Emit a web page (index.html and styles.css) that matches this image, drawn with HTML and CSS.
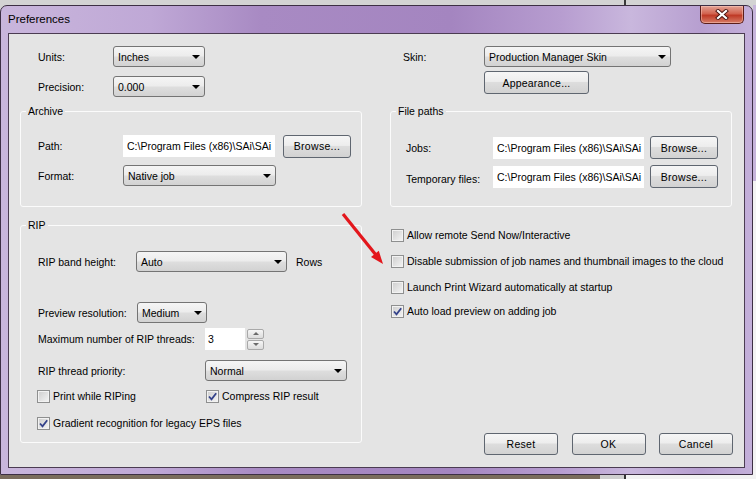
FILE: index.html
```html
<!DOCTYPE html>
<html lang="en">
<head>
    <meta charset="UTF-8">
    <meta name="viewport" content="width=device-width, initial-scale=1.0">
    <title>Preferences</title>
    <link rel="stylesheet" href="styles.css">
</head>
<body>
    <div class="behind-top"></div>
    <div class="screen">
        <div class="dialog">
            <div class="titlebar">
                <span class="title">Preferences</span>
                <div class="close-btn">
                    <svg width="16" height="11" viewBox="0 0 16 11">
                        <path d="M4 2 L12 9 M12 2 L4 9" stroke="#4a1410" stroke-width="4" stroke-linecap="square"/>
                        <path d="M4 2 L12 9 M12 2 L4 9" stroke="#fff" stroke-width="2.2" stroke-linecap="square"/>
                    </svg>
                </div>
            </div>

            <div class="client">
                <!-- left column -->
                <div class="col">
                    <div class="field top-field">
                        <label class="lbl lbl-units">Units:</label>
                        <div class="combo combo-units"><span>Inches</span><i class="caret"></i></div>
                    </div>
                    <div class="field top-field precision">
                        <label class="lbl lbl-units">Precision:</label>
                        <div class="combo combo-units"><span>0.000</span><i class="caret"></i></div>
                    </div>

                    <fieldset class="group archive">
                        <legend>Archive</legend>
                        <div class="group-body archive-body">
                            <div class="field path-row">
                                <label class="lbl lbl-archive">Path:</label>
                                <input class="textbox" type="text" value="C:\Program Files (x86)\SAi\SAi" readonly>
                                <button class="btn browse">Browse...</button>
                            </div>
                            <div class="field combo-row">
                                <label class="lbl lbl-archive">Format:</label>
                                <div class="combo combo-format"><span>Native job</span><i class="caret"></i></div>
                            </div>
                        </div>
                    </fieldset>

                    <fieldset class="group rip">
                        <legend>RIP</legend>
                        <div class="group-body rip-body">
                            <div class="field combo-row">
                                <label class="lbl lbl-band">RIP band height:</label>
                                <div class="combo combo-band"><span>Auto</span><i class="caret"></i></div>
                                <span class="unit">Rows</span>
                            </div>
                            <div class="field combo-row preview">
                                <label class="lbl lbl-preview">Preview resolution:</label>
                                <div class="combo combo-preview"><span>Medium</span><i class="caret"></i></div>
                            </div>
                            <div class="field threads">
                                <label class="lbl lbl-wide">Maximum number of RIP threads:</label>
                                <input class="textbox num" type="text" value="3" readonly>
                                <div class="spin">
                                    <div class="spin-btn"><i class="tri up"></i></div>
                                    <div class="spin-btn"><i class="tri down"></i></div>
                                </div>
                            </div>
                            <div class="field combo-row priority">
                                <label class="lbl lbl-wide">RIP thread priority:</label>
                                <div class="combo combo-priority"><span>Normal</span><i class="caret"></i></div>
                            </div>
                            <div class="field check-row first-checks">
                                <div class="check check-wide"><span class="box"></span>Print while RIPing</div>
                                <div class="check"><span class="box checked"><svg width="11" height="11" viewBox="0 0 11 11"><path d="M2 5.5 L4.5 8.3 L9.2 2.2" fill="none" stroke="#34428a" stroke-width="1.8"/></svg></span>Compress RIP result</div>
                            </div>
                            <div class="field check-row gradient">
                                <div class="check"><span class="box checked"><svg width="11" height="11" viewBox="0 0 11 11"><path d="M2 5.5 L4.5 8.3 L9.2 2.2" fill="none" stroke="#34428a" stroke-width="1.8"/></svg></span>Gradient recognition for legacy EPS files</div>
                            </div>
                        </div>
                    </fieldset>
                </div>

                <!-- right column -->
                <div class="col col-right">
                    <div class="field top-field">
                        <label class="lbl lbl-skin">Skin:</label>
                        <div class="combo combo-skin"><span>Production Manager Skin</span><i class="caret"></i></div>
                    </div>
                    <button class="btn appearance">Appearance...</button>

                    <fieldset class="group paths">
                        <legend>File paths</legend>
                        <div class="group-body paths-body">
                            <div class="field path-row">
                                <label class="lbl lbl-paths">Jobs:</label>
                                <input class="textbox" type="text" value="C:\Program Files (x86)\SAi\SAi" readonly>
                                <button class="btn browse">Browse...</button>
                            </div>
                            <div class="field path-row second">
                                <label class="lbl lbl-paths temp">Temporary files:</label>
                                <input class="textbox" type="text" value="C:\Program Files (x86)\SAi\SAi" readonly>
                                <button class="btn browse">Browse...</button>
                            </div>
                        </div>
                    </fieldset>

                    <div class="check-list">
                        <div class="check"><span class="box"></span>Allow remote Send Now/Interactive</div>
                        <div class="check"><span class="box"></span>Disable submission of job names and thumbnail images to the cloud</div>
                        <div class="check"><span class="box"></span>Launch Print Wizard automatically at startup</div>
                        <div class="check last"><span class="box checked"><svg width="11" height="11" viewBox="0 0 11 11"><path d="M2 5.5 L4.5 8.3 L9.2 2.2" fill="none" stroke="#34428a" stroke-width="1.8"/></svg></span>Auto load preview on adding job</div>
                    </div>

                    <div class="buttons">
                        <button class="btn action">Reset</button>
                        <button class="btn action">OK</button>
                        <button class="btn action">Cancel</button>
                    </div>
                </div>
            </div>
        </div>
        <div class="backapp"></div>
    </div>
    <div class="behind-bottom"></div>

    <svg class="annotation" width="50" height="62" viewBox="0 0 50 62">
        <path d="M5 6 L38 47" stroke="#e3161c" stroke-width="3.2"/>
        <path d="M45 56 L40.8 42.8 L33 49 Z" fill="#e3161c"/>
    </svg>
</body>
</html>
```

FILE: styles.css
```css
:root {
    --face: #e4e4e4;
    --edge: #4b3c52;
    --ctl-border: #747474;
    --btn-border: #5f6670;
    --group-line: #fbfbfb;
}

* {
    margin: 0;
    padding: 0;
    box-sizing: border-box;
}

body {
    position: relative;
    width: 756px;
    height: 479px;
    overflow: hidden;
    background-color: #76695a;
    font-family: 'Liberation Sans', Arial, sans-serif;
    font-size: 10.5px;
    color: #000;
}

.behind-top {
    height: 5px;
    background: linear-gradient(to right, #d3d3d3 624px, #3a3a3a 624px, #3a3a3a 626px, #d3d3d3 626px);
}

.screen {
    display: flex;
    height: 470px;
    background-color: #d3d3d3;
}

.backapp {
    flex: 1;
    background: linear-gradient(#c7b5db 0, #c7b5db 176px, #f3f3f3 176px);
}

.behind-bottom {
    height: 4px;
    background: linear-gradient(to right, #7a6c5c 600px, #cfcfcf 600px, #cfcfcf 624px, #333 624px, #333 626px, #f2f2f2 626px);
}

/* window frame */
.dialog {
    width: 753px;
    height: 470px;
    display: flex;
    flex-direction: column;
    padding: 0 7px 6px;
    border: 1px solid #3d2f44;
    border-radius: 7px 7px 0 0;
    background: linear-gradient(to right, #c9b6dc 0, #bfa8d6 150px, #a88ac3 260px, #a485c0 450px, #b79dd0 560px, #c9b7dd 630px, #b79fd0 700px, #c4b0da 753px);
}

.titlebar {
    height: 27px;
    display: flex;
    align-items: center;
    justify-content: space-between;
}

.title {
    font-size: 11.5px;
    padding-bottom: 1px;
}

.close-btn {
    align-self: flex-start;
    width: 44px;
    height: 18px;
    margin-right: 1px;
    display: flex;
    align-items: center;
    justify-content: center;
    border: 1px solid #5b1e1a;
    border-top: none;
    border-radius: 0 0 5px 5px;
    background: linear-gradient(#e3a294, #d2634f 45%, #bf3a26 55%, #d77c66);
    box-shadow: inset 0 0 0 1px rgba(255, 210, 200, 0.45);
}

.client {
    flex: 1;
    display: grid;
    grid-template-columns: 342px 342px;
    column-gap: 28px;
    padding: 12px 12px 12px 11px;
    background-color: var(--face);
    border: 1px solid var(--edge);
}

.col {
    display: flex;
    flex-direction: column;
}

/* rows and labels */
.field {
    display: flex;
    align-items: center;
}

.lbl {
    flex: none;
}

.top-field {
    height: 21px;
    padding-left: 18px;
}

.precision {
    margin-top: 9px;
}

.col-right .top-field {
    padding-left: 13px;
}

.lbl-units { width: 75px; }
.lbl-skin { width: 81px; }
.lbl-archive { width: 85px; }
.lbl-paths { width: 87px; }
.lbl-band { width: 98px; }
.lbl-preview { width: 99px; }
.lbl-wide { width: 167px; }

.temp {
    padding-top: 5px;
}

/* group boxes */
.group {
    border: 1px solid var(--group-line);
    border-radius: 3px;
}

.group legend {
    margin-left: 5px;
    padding: 0 2px;
    line-height: 14px;
}

.archive {
    margin-top: 7px;
}

.paths {
    margin-top: 10px;
}

.rip {
    margin-top: 11px;
}

.archive-body {
    padding: 16px 0 20px 17px;
}

.paths-body {
    padding: 18px 0 18px 15px;
}

.rip-body {
    padding: 19px 0 12px 17px;
}

.path-row {
    height: 23px;
}

.path-row.second {
    margin-top: 6px;
}

.archive .path-row {
    height: 24px;
}

.combo-row {
    height: 21px;
}

.archive .combo-row {
    margin-top: 7px;
}

.preview {
    margin-top: 30px;
}

.threads {
    height: 22px;
    margin-top: 5px;
}

.priority {
    margin-top: 10px;
}

.check-row {
    height: 14px;
    margin-left: -1px;
}

.first-checks {
    margin-top: 8px;
}

.gradient {
    margin-top: 13px;
}

.unit {
    margin-left: 9px;
}

/* controls */
.combo {
    height: 21px;
    display: flex;
    align-items: center;
    justify-content: space-between;
    padding: 0 4px 0 4px;
    border: 1px solid var(--ctl-border);
    border-radius: 3px;
    background: linear-gradient(#f5f5f5, #ececec 48%, #dedede 52%, #d2d2d2);
}

.combo span {
    padding-top: 1px;
}

.caret {
    width: 0;
    height: 0;
    border-left: 4px solid transparent;
    border-right: 4px solid transparent;
    border-top: 4px solid #000;
    margin-top: 1px;
}

.combo-units { width: 92px; }
.combo-skin { width: 187px; }
.combo-format { width: 153px; }
.combo-band { width: 151px; }
.combo-preview { width: 70px; }
.combo-priority { width: 142px; }

.textbox {
    width: 152px;
    height: 22px;
    padding: 0 0 0 4px;
    border: none;
    background-color: #fff;
    font: inherit;
    color: #000;
    outline: none;
}

.paths .textbox {
    width: 151px;
}

.textbox.num {
    width: 40px;
    padding-left: 3px;
}

.spin {
    display: flex;
    flex-direction: column;
    gap: 1px;
    margin-left: 2px;
}

.spin-btn {
    width: 17px;
    height: 10px;
    display: flex;
    align-items: center;
    justify-content: center;
    border: 1px solid #a9a9a9;
    border-radius: 2px;
    background: linear-gradient(#f6f6f6, #dcdcdc);
}

.tri {
    width: 0;
    height: 0;
    border-left: 3px solid transparent;
    border-right: 3px solid transparent;
}

.tri.up { border-bottom: 3px solid #6a6a6a; }
.tri.down { border-top: 3px solid #6a6a6a; }

.btn {
    display: flex;
    align-items: center;
    justify-content: center;
    height: 23px;
    font: inherit;
    color: #000;
    border: 1px solid var(--btn-border);
    border-radius: 3px;
    background: linear-gradient(#f6f6f6, #ededed 45%, #dddddd 50%, #d2d2d2);
}

.browse {
    width: 68px;
    margin-left: 8px;
    letter-spacing: 0.3px;
}

.paths .browse {
    margin-left: 6px;
}

.appearance {
    align-self: flex-start;
    width: 105px;
    margin: 4px 0 0 94px;
    letter-spacing: 0.2px;
}

/* checkboxes */
.check {
    display: flex;
    align-items: center;
    gap: 3px;
}

.check-wide {
    width: 169px;
}

.box {
    flex: none;
    width: 13px;
    height: 13px;
    display: flex;
    align-items: center;
    justify-content: center;
    border: 1px solid #8e8f8f;
    background: linear-gradient(135deg, #cdcdcd, #f5f5f5);
    box-shadow: inset 0 0 0 1px #f2f2f2;
}

.check-list {
    margin-top: 20px;
    padding-left: 1px;
}

.check-list .check {
    height: 16px;
    margin-bottom: 10px;
}

.check-list .check.last {
    margin-top: -2px;
}

/* dialog buttons */
.buttons {
    margin-top: auto;
    margin-right: -1px;
    display: flex;
    justify-content: flex-end;
    gap: 13.5px;
}

.action {
    width: 74px;
    height: 22px;
    letter-spacing: 0.3px;
}

.annotation {
    position: absolute;
    left: 338px;
    top: 208px;
    pointer-events: none;
}
```
